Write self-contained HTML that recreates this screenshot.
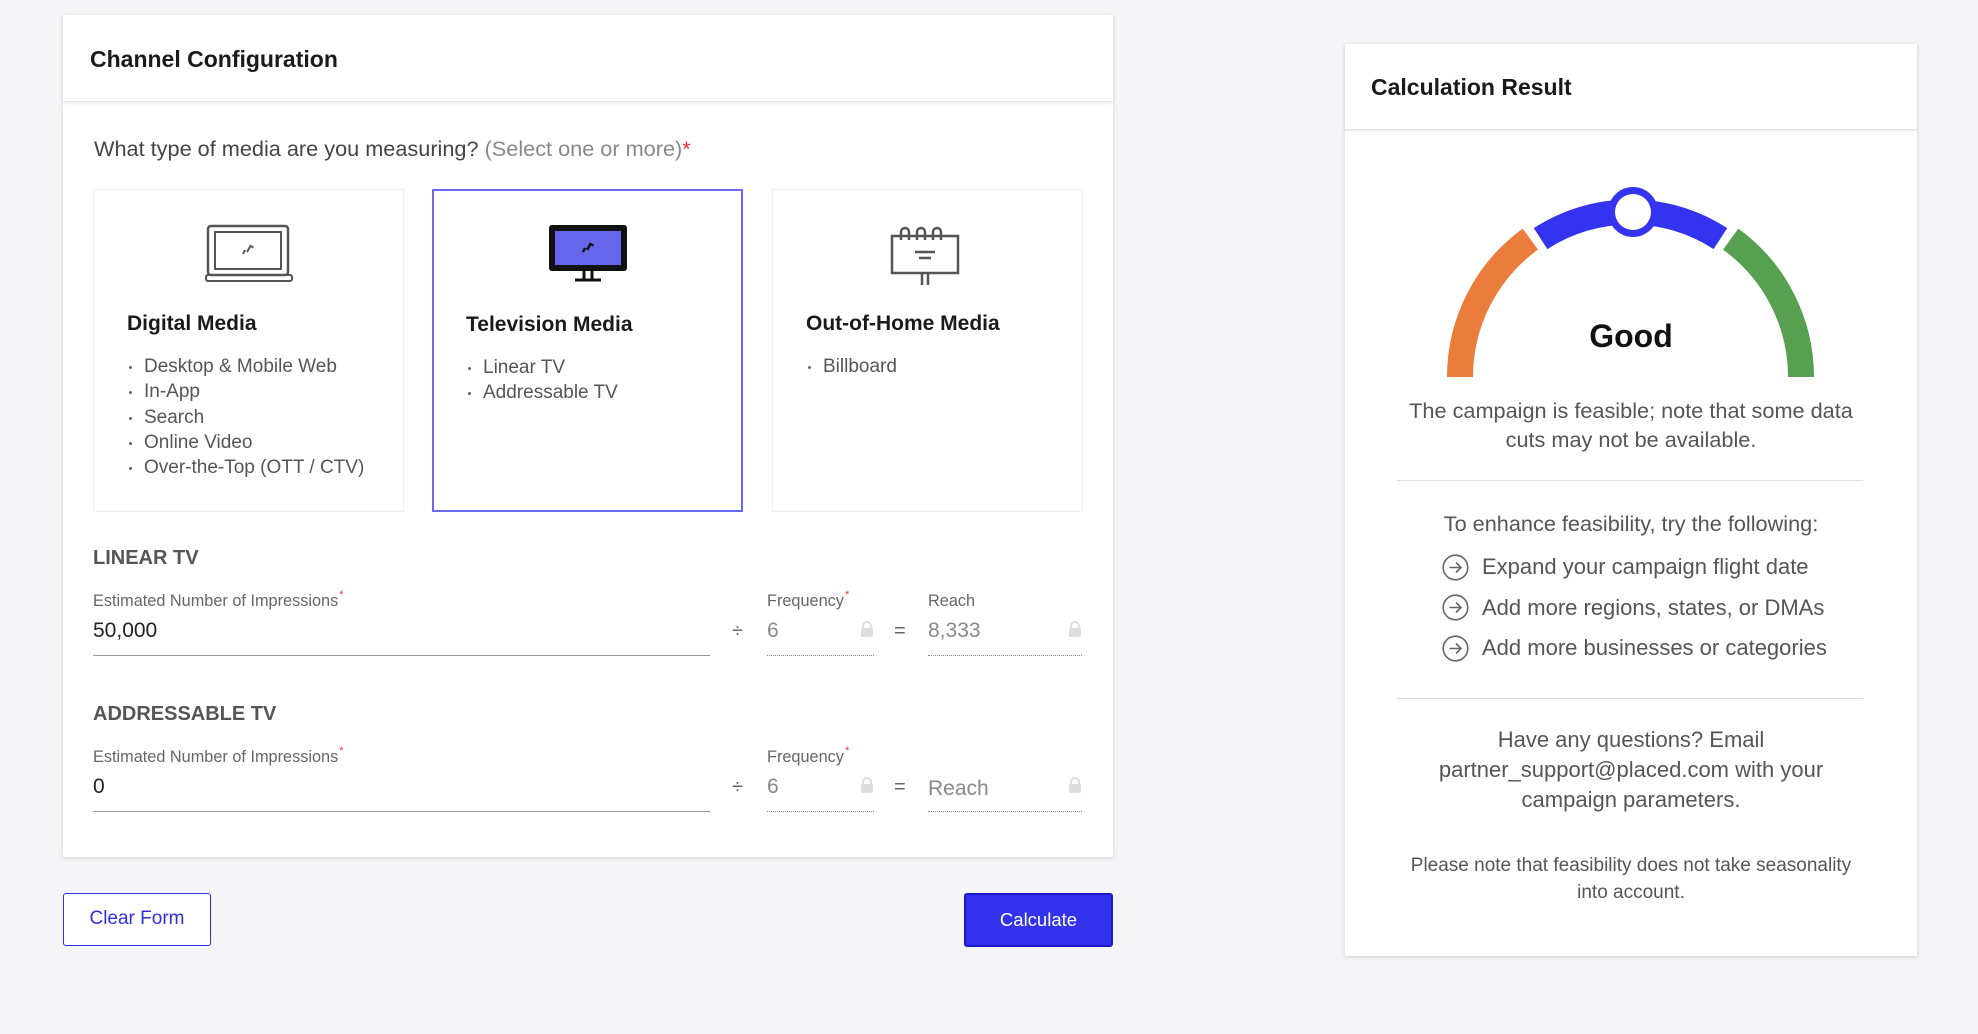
<!DOCTYPE html>
<html><head><meta charset="utf-8"><style>
*{box-sizing:border-box;margin:0;padding:0}
body{width:1978px;height:1034px;background:#f5f4f6;font-family:"Liberation Sans",Arial,sans-serif;position:relative;overflow:hidden;color:#333}
.a{position:absolute;white-space:nowrap}
.panel{position:absolute;background:#fff;box-shadow:0 1px 4px rgba(0,0,0,.15)}
.hdr{position:absolute;left:0;right:0;top:0;border-bottom:1px solid #e4e4e4;box-shadow:0 2px 3px rgba(0,0,0,.06)}
.card{position:absolute;top:189px;width:311px;height:323px;border:1px solid #f0f0f0;background:#fff}
.card.sel{border:2px solid #6a6af0}
.ct{position:absolute;left:33px;top:122px;font-size:21px;font-weight:bold;color:#1a1a1a}
.ul{position:absolute;left:35px;top:164px;list-style:none;font-size:19px;color:#555}
.ul li{display:block;height:25.3px;line-height:25.3px;position:relative;padding-left:15px}
.ul li:before{content:"";position:absolute;left:0;top:12px;width:3px;height:3px;border-radius:50%;background:#666}
.sec{font-size:20px;font-weight:bold;color:#555}
.lbl{font-size:16.3px;color:#666}
.lbl i{color:#e33;font-style:normal;font-size:11px;vertical-align:top;position:relative;top:-3px;margin-left:1px}
.val{font-size:21px;color:#222}
.dis{font-size:21px;color:#888}
.line{position:absolute;height:1px;background:#999}
.dot{position:absolute;height:0;border-top:1px dotted #888}
.op{font-size:20px;color:#666}
.r{font-size:21.7px;color:#555;text-align:center;position:absolute;left:0;right:0;line-height:29px}
.it{display:flex;align-items:center;height:40.5px}
.it svg{margin-right:13px;flex:none}
</style></head><body>

<div class="panel" style="left:63px;top:15px;width:1050px;height:842px">
 <div class="hdr" style="height:87px"></div>
 <div class="a" style="left:27px;top:31px;font-size:23px;font-weight:bold;color:#1a1a1a">Channel Configuration</div>
 <div class="a" style="left:31px;top:121px;font-size:21.7px;color:#444">What type of media are you measuring? <span style="color:#888">(Select one or more)</span><span style="color:#e33">*</span></div>
</div>

<div class="card" style="left:93px">
 <svg class="a" style="left:111px;top:34px" width="88" height="60" viewBox="0 0 88 60"><rect x="3" y="2" width="80" height="49" rx="3" fill="none" stroke="#555" stroke-width="2.5"/><rect x="10" y="8" width="66" height="37" fill="none" stroke="#555" stroke-width="2"/><rect x="1" y="51" width="86" height="6" rx="2" fill="none" stroke="#555" stroke-width="2"/><path d="M38 30l2-4M42 28l4-7M47 24l1-2" stroke="#555" stroke-width="2"/></svg>
 <div class="ct">Digital Media</div>
 <ul class="ul"><li>Desktop &amp; Mobile Web</li><li>In-App</li><li>Search</li><li>Online Video</li><li>Over-the-Top (OTT / CTV)</li></ul>
</div>
<div class="card sel" style="left:432px">
 <svg class="a" style="left:113px;top:32px" width="82" height="60" viewBox="0 0 82 60"><rect x="2" y="2" width="78" height="46" rx="3" fill="#111"/><rect x="7" y="7" width="68" height="36" fill="#6767ee" stroke="#111" stroke-width="2"/><path d="M36 29l2-4M40 27l4-7M45 23l1-2" stroke="#111" stroke-width="2.5"/><path d="M37 48v8M45 48v8M28 57h26" stroke="#111" stroke-width="3"/></svg>
 <div class="ct" style="left:32px">Television Media</div>
 <ul class="ul" style="left:34px"><li>Linear TV</li><li>Addressable TV</li></ul>
</div>
<div class="card" style="left:772px">
 <svg class="a" style="left:116px;top:34px" width="72" height="62" viewBox="0 0 72 62"><rect x="3" y="12" width="66" height="37" fill="none" stroke="#555" stroke-width="2.5"/><path d="M12 16v-8a4 4 0 0 1 8 0v8M28 16v-8a4 4 0 0 1 8 0v8M44 16v-8a4 4 0 0 1 8 0v8M26 28h20M30 34h12M33 49v12M39 49v12" fill="none" stroke="#555" stroke-width="2.5"/></svg>
 <div class="ct">Out-of-Home Media</div>
 <ul class="ul"><li>Billboard</li></ul>
</div>

<div class="a sec" style="left:93px;top:547px">LINEAR TV</div>
<div class="a lbl" style="left:93px;top:592px">Estimated Number of Impressions<i>*</i></div>
<div class="a val" style="left:93px;top:619px">50,000</div>
<div class="line" style="left:93px;top:655px;width:617px"></div>
<div class="a op" style="left:732px;top:620px">÷</div>
<div class="a lbl" style="left:767px;top:592px">Frequency<i>*</i></div>
<div class="a dis" style="left:767px;top:619px">6</div>
<div class="dot" style="left:767px;top:655px;width:107px"></div>
<div class="a op" style="left:894px;top:620px">=</div>
<div class="a lbl" style="left:928px;top:592px">Reach</div>
<div class="a dis" style="left:928px;top:619px">8,333</div>
<div class="dot" style="left:928px;top:655px;width:154px"></div>

<div class="a sec" style="left:93px;top:703px">ADDRESSABLE TV</div>
<div class="a lbl" style="left:93px;top:748px">Estimated Number of Impressions<i>*</i></div>
<div class="a val" style="left:93px;top:775px">0</div>
<div class="line" style="left:93px;top:811px;width:617px"></div>
<div class="a op" style="left:732px;top:776px">÷</div>
<div class="a lbl" style="left:767px;top:748px">Frequency<i>*</i></div>
<div class="a dis" style="left:767px;top:775px">6</div>
<div class="dot" style="left:767px;top:811px;width:107px"></div>
<div class="a op" style="left:894px;top:776px">=</div>
<div class="a dis" style="left:928px;top:777px">Reach</div>
<div class="dot" style="left:928px;top:811px;width:154px"></div>

<svg class="a" style="left:860px;top:621px" width="14" height="16" viewBox="0 0 14 16"><path d="M3 7V5a4 4 0 0 1 8 0v2" fill="none" stroke="#ddd" stroke-width="2"/><rect x="1" y="7" width="12" height="9" rx="1.5" fill="#ddd"/></svg>
<svg class="a" style="left:1068px;top:621px" width="14" height="16" viewBox="0 0 14 16"><path d="M3 7V5a4 4 0 0 1 8 0v2" fill="none" stroke="#ddd" stroke-width="2"/><rect x="1" y="7" width="12" height="9" rx="1.5" fill="#ddd"/></svg>
<svg class="a" style="left:860px;top:777px" width="14" height="16" viewBox="0 0 14 16"><path d="M3 7V5a4 4 0 0 1 8 0v2" fill="none" stroke="#ddd" stroke-width="2"/><rect x="1" y="7" width="12" height="9" rx="1.5" fill="#ddd"/></svg>
<svg class="a" style="left:1068px;top:777px" width="14" height="16" viewBox="0 0 14 16"><path d="M3 7V5a4 4 0 0 1 8 0v2" fill="none" stroke="#ddd" stroke-width="2"/><rect x="1" y="7" width="12" height="9" rx="1.5" fill="#ddd"/></svg>

<div class="a" style="left:63px;top:893px;width:148px;height:53px;border:1.5px solid #3030e8;border-radius:3px;background:#fff;color:#2f2fe0;font-size:19px;text-align:center;line-height:50px">Clear Form</div>
<div class="a" style="left:964px;top:893px;width:149px;height:54px;border:2px solid #1a1acc;border-radius:3px;background:#3333ee;color:#fff;font-size:18.5px;text-align:center;line-height:50px">Calculate</div>

<div class="panel" style="left:1345px;top:44px;width:572px;height:912px">
 <div class="hdr" style="height:86px"></div>
 <div class="a" style="left:26px;top:30px;font-size:23px;font-weight:bold;color:#1a1a1a">Calculation Result</div>
 <svg class="a" style="left:0;top:0" width="572" height="400" viewBox="0 0 572 400">
  <g fill="none">
   <path d="M115 333 A170.5 170.5 0 0 1 185.3 195.1" stroke="#ea7c3c" stroke-width="26"/>
   <path d="M195.6 194.6 A165 165 0 0 1 375.4 194.6" stroke="#3333f0" stroke-width="25"/>
   <path d="M385.7 195.1 A170.5 170.5 0 0 1 456 333" stroke="#56a050" stroke-width="26"/>
  </g>
  <circle cx="288" cy="168" r="25" fill="#3333f0"/><circle cx="288" cy="168" r="18" fill="#fff"/>
 </svg>
 <div class="r" style="top:272px;font-size:32px;font-weight:bold;color:#111;line-height:40px">Good</div>
 <div class="r" style="top:352px">The campaign is feasible; note that some data<br>cuts may not be available.</div>
 <div class="a" style="left:52px;top:436px;width:466px;height:1px;background:#ddd"></div>
 <div class="r" style="top:465px">To enhance feasibility, try the following:</div>
 <div class="a" style="left:97px;top:503px;font-size:22px;color:#555">
  <div class="it"><svg width="27" height="27" viewBox="0 0 27 27"><circle cx="13.5" cy="13.5" r="12.3" fill="none" stroke="#666" stroke-width="1.6"/><path d="M7.5 13.5h11M14 8.5l5 5-5 5" fill="none" stroke="#666" stroke-width="1.6"/></svg>Expand your campaign flight date</div>
  <div class="it"><svg width="27" height="27" viewBox="0 0 27 27"><circle cx="13.5" cy="13.5" r="12.3" fill="none" stroke="#666" stroke-width="1.6"/><path d="M7.5 13.5h11M14 8.5l5 5-5 5" fill="none" stroke="#666" stroke-width="1.6"/></svg>Add more regions, states, or DMAs</div>
  <div class="it"><svg width="27" height="27" viewBox="0 0 27 27"><circle cx="13.5" cy="13.5" r="12.3" fill="none" stroke="#666" stroke-width="1.6"/><path d="M7.5 13.5h11M14 8.5l5 5-5 5" fill="none" stroke="#666" stroke-width="1.6"/></svg>Add more businesses or categories</div>
 </div>
 <div class="a" style="left:52px;top:654px;width:466px;height:1px;background:#ddd"></div>
 <div class="r" style="top:681px;line-height:30px;font-size:22px">Have any questions? Email<br>partner_support@placed.com with your<br>campaign parameters.</div>
 <div class="r" style="top:808px;font-size:19px;line-height:27px">Please note that feasibility does not take seasonality<br>into account.</div>
</div>
</body></html>
